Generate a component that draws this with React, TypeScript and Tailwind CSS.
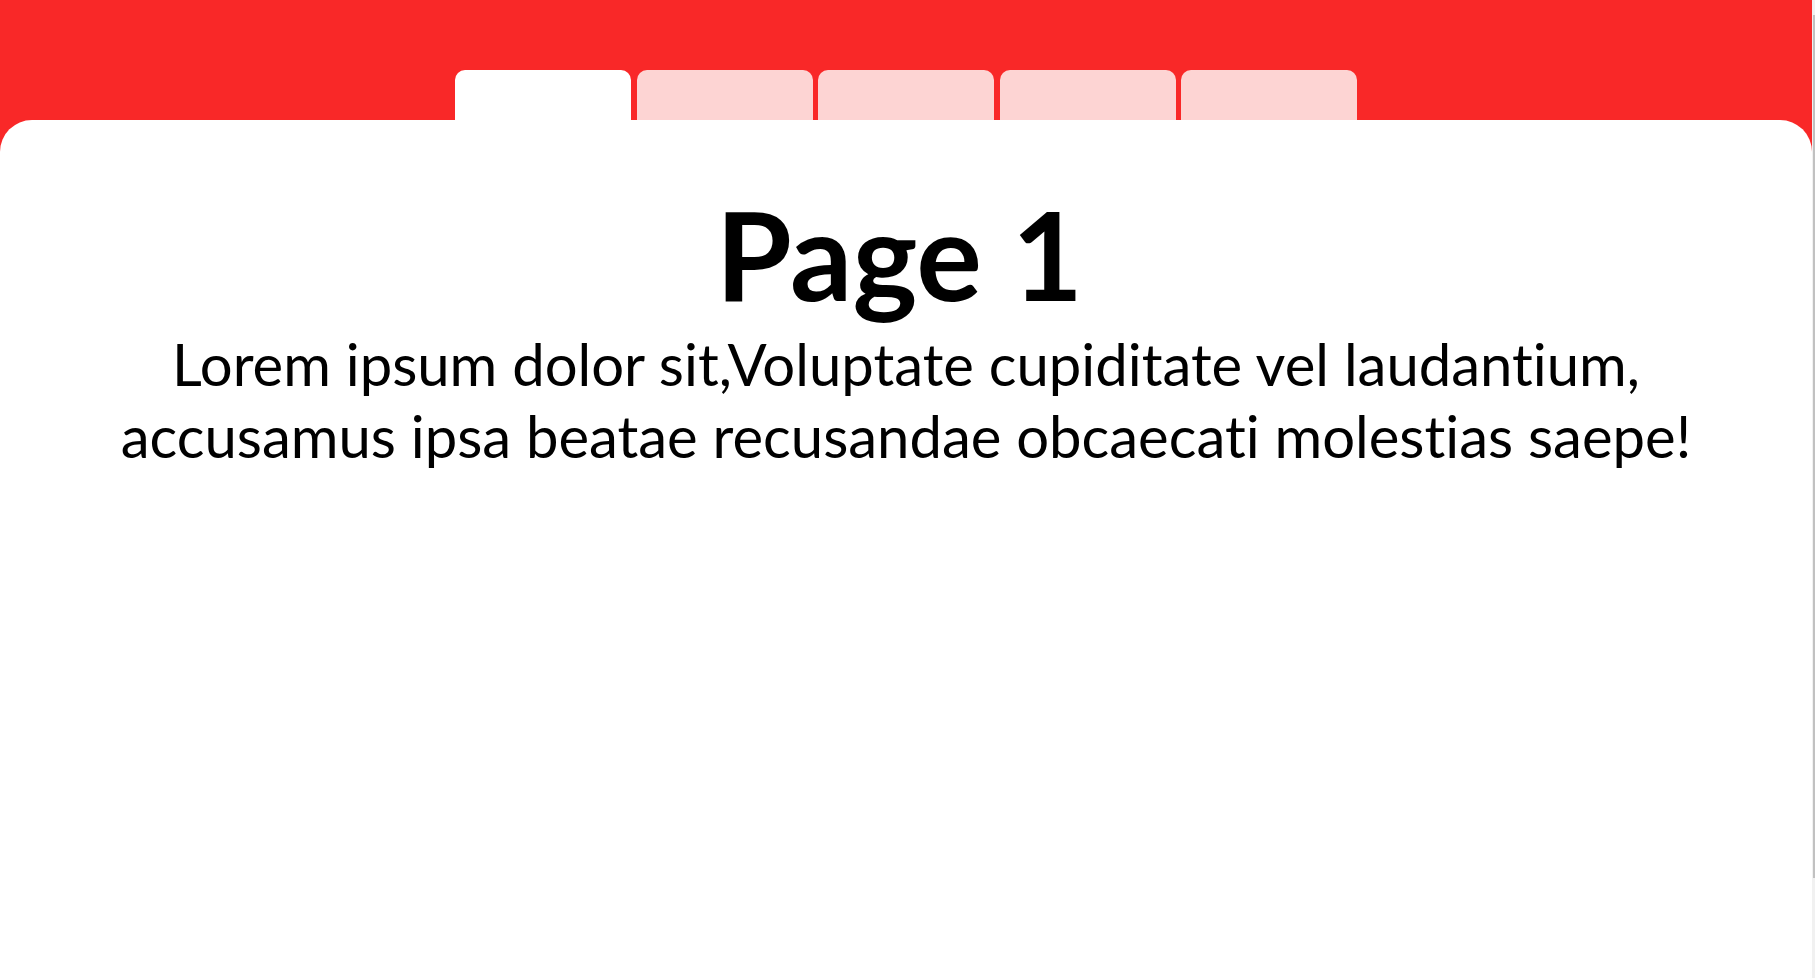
import React from "react";

export default function App() {
  const tabs = [true, false, false, false, false];
  return (
    <div
      className="flex h-screen overflow-hidden bg-white"
      style={{ fontFamily: "Lato, 'Open Sans', sans-serif" }}
    >
      <main className="flex min-w-0 flex-1 flex-col bg-[#f92828]">
        <div className="flex justify-center gap-[5.5px] pt-[70px]">
          {tabs.map((active, i) => (
            <div
              key={i}
              className={
                active
                  ? "h-[50px] w-[176px] rounded-t-[10px] bg-white"
                  : "h-[50px] w-[176px] rounded-t-[10px] bg-[#fdd4d3]"
              }
            />
          ))}
        </div>
        <div className="flex-1 rounded-t-[32px] bg-white pt-[63px] text-center text-black [font-variant-ligatures:none]">
          <h1 className="pr-[13px] text-[123px] font-bold leading-[1.15]">Page 1</h1>
          <p className="mt-[4px] text-[58px] leading-[72px]">
            Lorem ipsum dolor sit,Voluptate cupiditate vel laudantium,
            <br />
            accusamus ipsa beatae recusandae obcaecati molestias saepe!
          </p>
        </div>
      </main>
      <aside className="w-[3px] shrink-0 bg-[#f1f1f1] pt-[15px] pl-[1px]">
        <div className="h-[863px] w-[2px] bg-[#c1c1c1]" />
      </aside>
    </div>
  );
}
